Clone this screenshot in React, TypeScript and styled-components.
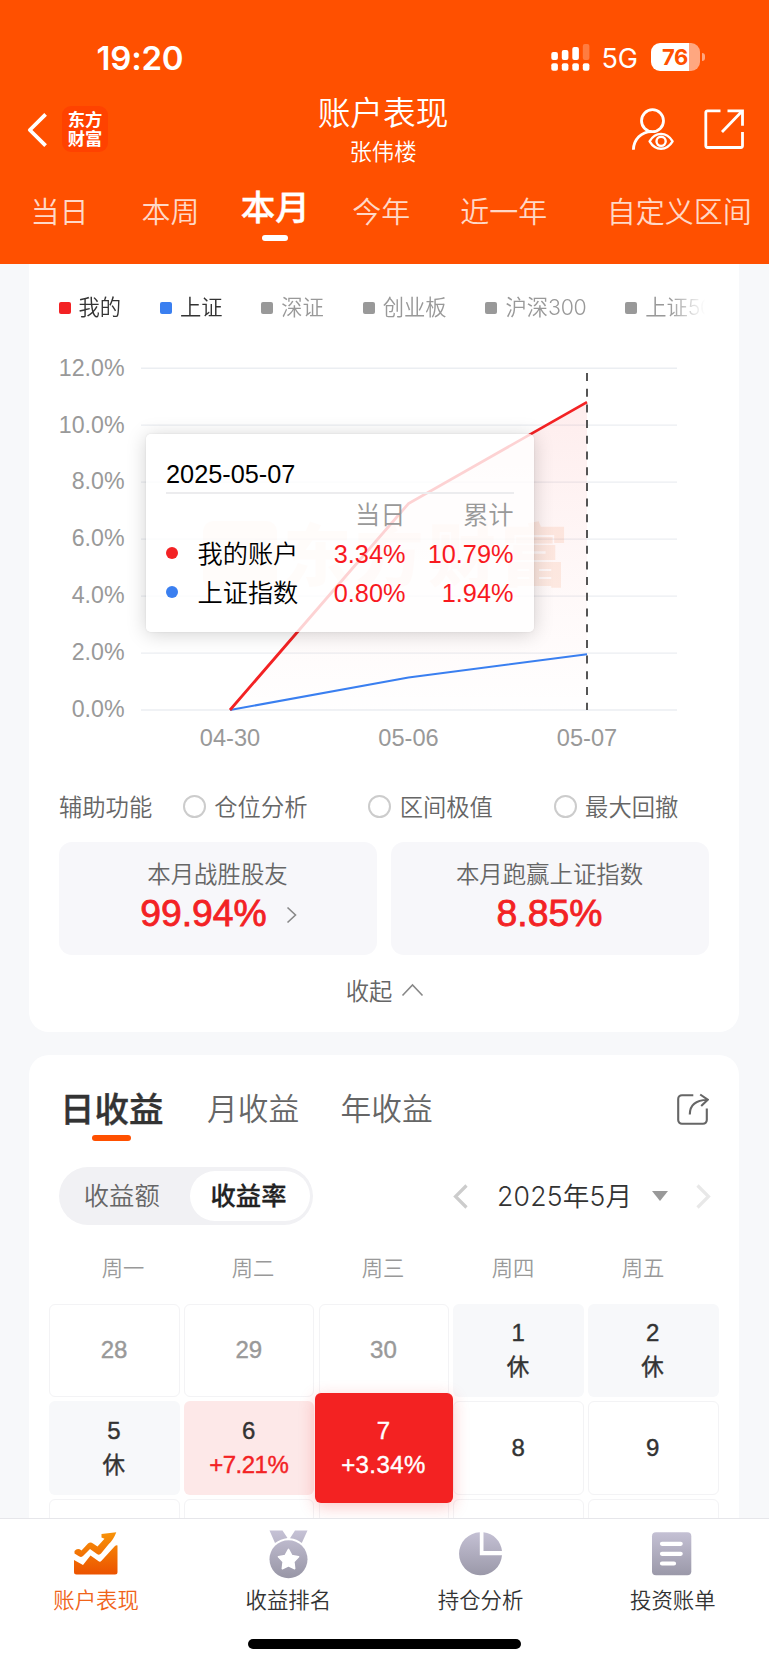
import React from "react";
import styled, { createGlobalStyle, css } from "styled-components";

const CJK = '"Noto Sans CJK SC", sans-serif';
const HELV = '"Liberation Sans", "Noto Sans CJK SC", sans-serif';
const UI = 'Inter, "Noto Sans CJK SC", sans-serif';

const Global = createGlobalStyle`
  * { box-sizing: border-box; }
  body { margin: 0; background: #f7f8fa; font-family: ${CJK}; font-weight: 350; }
`;

const Screen = styled.div`
  width: 769px;
  height: 1665px;
  display: flex;
  flex-direction: column;
  overflow: hidden;
  background: #f7f8fa;
`;

/* ---------- header ---------- */

const Header = styled.header`
  height: 264px;
  flex: none;
  display: flex;
  flex-direction: column;
  background: #ff5000;
  color: #fff;
`;

const StatusBar = styled.div`
  height: 86px;
  padding: 28px 64.5px 0 96.5px;
  display: flex;
  align-items: center;
  font-family: ${UI};
`;

const Clock = styled.div`
  flex: 1;
  font-size: 33px;
  font-weight: 600;
  line-height: 40px;
  padding-top: 1px;
  letter-spacing: -0.2px;
`;

const Network = styled.div`
  width: 37px;
  margin: 0 12px;
  font-size: 27px;
  font-weight: 400;
  line-height: 40px;
  padding-top: 3px;
  letter-spacing: -0.2px;
`;

const Battery = styled.div`
  width: 49px;
  height: 28px;
  border-radius: 9px;
  display: flex;
  align-items: center;
  justify-content: center;
  background: linear-gradient(90deg, #fff 0 38px, #ffa780 38px);
  color: #ff5000;
  font-size: 22px;
  font-weight: 700;
  letter-spacing: -0.3px;
`;

const BatteryTip = styled.div`
  width: 3px;
  height: 8px;
  margin-left: 2px;
  border-radius: 0 4px 4px 0;
  background: #ffa780;
`;

const TitleBar = styled.div`
  height: 90px;
  display: grid;
  grid-template-columns: 258.5px 1fr 261.5px;
`;

const TitleLeft = styled.div`
  display: flex;
  align-items: flex-start;
  padding: 20px 0 0 27px;
`;

const Logo = styled.div`
  width: 46px;
  height: 46px;
  margin-left: 15px;
  border-radius: 9px;
  background: #ff4200;
  display: flex;
  flex-direction: column;
  align-items: center;
  justify-content: center;
  font-size: 17.3px;
  line-height: 19.5px;
  font-weight: 700;
  padding-bottom: 2px;
`;

const TitleCenter = styled.div`
  text-align: center;
`;

const Title = styled.div`
  margin-top: 5px;
  font-size: 32.7px;
  line-height: 40px;
`;

const Subtitle = styled.div`
  margin-top: -1px;
  font-size: 22.4px;
  line-height: 40px;
`;

const TitleRight = styled.div`
  display: flex;
  justify-content: flex-end;
  padding: 20px 24.5px 0 0;
  gap: 28px;
`;

const Periods = styled.nav`
  flex: 1;
  display: flex;
  padding-left: 30px;
`;

const Period = styled.div<{ $gap: number; $on?: boolean }>`
  margin-left: ${(p) => p.$gap}px;
  display: flex;
  flex-direction: column;
  align-items: center;
  white-space: nowrap;
  font-size: 29px;
  line-height: 40px;
  padding-top: 13.5px;
  color: rgba(255, 255, 255, 0.78);
  ${(p) =>
    p.$on &&
    css`
      padding-top: 9px;
      font-size: 34.6px;
      font-weight: 500;
      -webkit-text-stroke: 0.4px #fff;
      color: #fff;
    `}
`;

const PeriodMark = styled.i`
  width: 26px;
  height: 6px;
  margin-top: 10px;
  border-radius: 3px;
  background: #fff;
`;

/* ---------- body ---------- */

const Body = styled.main`
  height: 1254px;
  flex: none;
  overflow: hidden;
  padding: 0 30px 0 29px;
`;

const Card = styled.section<{ $first?: boolean }>`
  background: #fff;
  border-radius: ${(p) => (p.$first ? "0 0 20px 20px" : "20px")};
  height: ${(p) => (p.$first ? 768 : 520)}px;
  margin-bottom: 23px;
`;

const Legend = styled.div`
  margin-left: 29.5px;
  width: 662px;
  padding-top: 28px;
  height: 56px;
  display: flex;
  gap: 38.8px;
  mask-image: linear-gradient(90deg, #000 610px, transparent 646px);
`;

const LegendItem = styled.div<{ $muted?: boolean }>`
  flex: none;
  display: flex;
  align-items: center;
  gap: 8px;
  font-size: 21.3px;
  line-height: 28px;
  color: ${(p) => (p.$muted ? "#999" : "#333")};
`;

const LegendDigits = styled.span`
  font-family: ${UI};
  font-weight: 350;
  letter-spacing: -0.3px;
`;

const Swatch = styled.i<{ $color: string }>`
  width: 12px;
  height: 12px;
  margin-top: 3px;
  border-radius: 2px;
  background: ${(p) => p.$color};
`;

const ChartBox = styled.div`
  position: relative;
  height: 460px;
`;

const Tooltip = styled.div`
  position: absolute;
  left: 117px;
  top: 113.5px;
  width: 388px;
  height: 198px;
  padding: 18px 20.5px 0 20px;
  border-radius: 5px;
  background: rgba(255, 255, 255, 0.8);
  box-shadow: 0 2px 20px rgba(0, 0, 0, 0.18), 0 0 2px rgba(0, 0, 0, 0.1);
  font-family: ${HELV};
  font-size: 25.3px;
  font-weight: 350;
  color: #000;
`;

const TooltipDate = styled.div`
  height: 42px;
  line-height: 44px;
  border-bottom: 2px solid #ececee;
`;

const TooltipRow = styled.div<{ $head?: boolean }>`
  display: grid;
  grid-template-columns: 31.5px 100px 1fr 108px;
  align-items: center;
  text-align: right;
  white-space: nowrap;
  line-height: 39px;
  height: ${(p) => (p.$head ? 41 : 39)}px;
  padding-top: ${(p) => (p.$head ? 2 : 0)}px;
  color: ${(p) => (p.$head ? "#999" : "#f8191f")};
`;

const TooltipName = styled.span`
  text-align: left;
  font-size: 25.2px;
  color: #000;
`;

const Dot = styled.i<{ $color: string }>`
  width: 12px;
  height: 12px;
  margin-top: -2px;
  border-radius: 50%;
  background: ${(p) => p.$color};
`;

const Assist = styled.div`
  height: 51px;
  padding-left: 30px;
  display: flex;
  align-items: center;
  font-size: 23.3px;
  color: #666;
`;

const Option = styled.div`
  width: 185.7px;
  display: flex;
  align-items: center;
  gap: 8.5px;
`;

const AssistLabel = styled.div`
  width: 124px;
`;

const Radio = styled.i`
  width: 23px;
  height: 23px;
  margin-top: 2px;
  border: 2px solid #ccc;
  border-radius: 50%;
`;

const Stats = styled.div`
  margin: 11px 30px 0;
  display: grid;
  grid-template-columns: 1fr 1fr;
  gap: 14px;
`;

const Stat = styled.div`
  height: 113px;
  padding: 13px 1px 0 0;
  border-radius: 13px;
  background: #f7f7fa;
  text-align: center;
  font-size: 23.4px;
  line-height: 36px;
  color: #666;
`;

const StatValue = styled.div<{ $arrow?: boolean }>`
  display: flex;
  justify-content: center;
  align-items: center;
  gap: 19px;
  padding-left: ${(p) => (p.$arrow ? 3 : 0)}px;
  height: 44px;
  font-family: ${HELV};
  font-weight: 400;
  font-size: 37.3px;
  color: #f32224;
  -webkit-text-stroke: 0.8px #f32224;
  svg { margin-top: 4px; }
`;

const Collapse = styled.div`
  margin-top: 15.5px;
  height: 39px;
  padding-left: 2px;
  display: flex;
  align-items: center;
  justify-content: center;
  gap: 9px;
  font-size: 23.3px;
  color: #666;
`;

/* ---------- income card ---------- */

const IncomeTabs = styled.div`
  height: 86px;
  padding: 0 30px 0 31px;
  display: flex;
`;

const IncomeTab = styled.div<{ $on?: boolean }>`
  display: flex;
  flex-direction: column;
  align-items: center;
  padding-top: 31px;
  margin-right: ${(p) => (p.$on ? 43.5 : 41.5)}px;
  font-size: ${(p) => (p.$on ? 34.5 : 30.7)}px;
  font-weight: ${(p) => (p.$on ? 500 : 350)};
  -webkit-text-stroke: ${(p) => (p.$on ? "0.4px #333" : "0")};
  line-height: 42px;
  color: ${(p) => (p.$on ? "#333" : "#666")};
`;

const IncomeMark = styled.i`
  width: 39px;
  height: 6px;
  margin-top: 7px;
  border-radius: 3px;
  background: #ff5000;
`;

const ShareSlot = styled.div`
  margin: 37px 0 0 auto;
`;

const Controls = styled.div`
  margin: 26px 28px 0 30px;
  height: 58px;
  display: flex;
  align-items: center;
  justify-content: space-between;
`;

const Toggle = styled.div`
  width: 253.5px;
  height: 58px;
  padding: 4px 3px;
  display: flex;
  border-radius: 29px;
  background: #f1f1f4;
`;

const Choice = styled.div<{ $on?: boolean }>`
  width: ${(p) => (p.$on ? 120 : 127.5)}px;
  height: 50px;
  padding-right: ${(p) => (p.$on ? 2 : 8)}px;
  border-radius: 25px;
  text-align: center;
  font-size: 25.3px;
  line-height: 47px;
  font-weight: ${(p) => (p.$on ? 500 : 350)};
  -webkit-text-stroke: ${(p) => (p.$on ? "0.3px #222" : "0")};
  color: ${(p) => (p.$on ? "#222" : "#666")};
  background: ${(p) => (p.$on ? "#fff" : "transparent")};
`;

const MonthPicker = styled.div`
  display: flex;
  align-items: center;
  font-family: ${UI};
  font-weight: 350;
  font-size: 26.6px;
  color: #333;
`;

const Month = styled.span`
  width: 134px;
  margin: 0 21px 0 28px;
  padding-bottom: 3px;
  letter-spacing: 0.2px;
  white-space: nowrap;
`;

const MonthNext = styled.span`
  display: flex;
  margin-left: 27px;
`;

const Weekdays = styled.div`
  margin: 27px 31px 0 29px;
  display: grid;
  grid-template-columns: repeat(5, 1fr);
  text-align: center;
  font-size: 21.3px;
  line-height: 30px;
  color: #999;
`;

const Days = styled.div`
  margin: 21.5px 0 0 20.3px;
  display: grid;
  grid-template-columns: repeat(5, 130.5px);
  grid-auto-rows: 93.4px;
  gap: 4.3px 4.2px;
`;

type Kind = "off" | "plain" | "rest" | "gain" | "active";

const kinds = {
  off: css`color: #999; border-color: #f3f3f5;`,
  plain: css`border-color: #f3f3f5;`,
  rest: css`background: #f7f8fa;`,
  gain: css`background: #fde8e8;`,
  active: css`
    z-index: 1;
    margin: -8.2px -4.1px;
    color: #fff;
    background: #f32222;
    box-shadow: 0 4px 16px rgba(243, 34, 34, 0.25);
  `,
};

const Day = styled.div<{ $kind: Kind }>`
  display: flex;
  flex-direction: column;
  align-items: center;
  justify-content: center;
  padding: 0 1px 0 0;
  border: 1.4px solid transparent;
  border-radius: 6px;
  font-family: ${HELV};
  font-weight: 400;
  font-size: 24px;
  line-height: 33.7px;
  color: #333;
  -webkit-text-stroke: 0.4px currentColor;
  ${(p) => kinds[p.$kind]}
`;

const Note = styled.span<{ $color?: string; $tight?: boolean }>`
  color: ${(p) => p.$color || "inherit"};
  letter-spacing: ${(p) => (p.$tight ? -0.5 : 0.4)}px;
`;

const RestNote = styled(Note)`
  font-size: 22.5px;
  padding-top: 1px;
  margin-bottom: -1px;
`;

/* ---------- bottom bar ---------- */

const TabBar = styled.footer`
  height: 147px;
  flex: none;
  border-top: 1px solid #e6e6ea;
  background: #fff;
  display: flex;
  flex-direction: column;
`;

const TabRow = styled.div`
  height: 120px;
  display: grid;
  grid-template-columns: repeat(4, 1fr);
`;

const TabItem = styled.div<{ $on?: boolean }>`
  display: flex;
  flex-direction: column;
  align-items: center;
  padding-top: 9px;
  font-size: 21.4px;
  line-height: 30px;
  color: ${(p) => (p.$on ? "#f0641a" : "#333")};
  svg { margin-bottom: 4px; }
`;

const HomeBar = styled.div`
  width: 273px;
  height: 10px;
  align-self: center;
  margin-right: 1px;
  border-radius: 5px;
  background: #000;
`;

/* ---------- drawings ---------- */

const SignalIcon = () => (
  <svg width="39" height="28" viewBox="0 0 39 28" fill="#fff">
    {[9, 7, 4, 1].map((top, i) => (
      <g key={i}>
        <rect x={i * 10.5 + 0.3} y={top} width="6.6" height={17 - top} rx="2" opacity={i === 3 ? 0.25 : 1} />
        <rect x={i * 10.5 + 0.3} y="20.3" width="6.6" height="7.4" rx="2" />
      </g>
    ))}
  </svg>
);

const BackIcon = () => (
  <svg width="20" height="48" viewBox="0 0 20 48" fill="none" stroke="#fff" strokeWidth="3.8">
    <path d="M18.6 8.3 2.8 24l15.8 15.7" strokeLinejoin="round" />
  </svg>
);

const UserEyeIcon = () => (
  <svg width="44" height="46" viewBox="0 0 44 46" fill="none" stroke="#fff" strokeWidth="2.8">
    <circle cx="21.5" cy="14.7" r="11" />
    <path d="M2.4 43.8C2.6 33.5 10.5 25.6 20.5 25.6" />
    <path d="M18.6 35.3C24.5 25.4 35.5 25.4 41.6 35.3 35.5 45.2 24.5 45.2 18.6 35.3Z" strokeWidth="2.4" strokeLinejoin="round" />
    <circle cx="30.1" cy="35.3" r="4.6" strokeWidth="2.4" />
  </svg>
);

const ExportIcon = () => (
  <svg width="42" height="46" viewBox="0 0 42 46" fill="none" stroke="#fff" strokeWidth="2.8">
    <path d="M17.5 4.8H4.5a1.7 1.7 0 0 0-1.7 1.7v33.3a1.7 1.7 0 0 0 1.7 1.7h33.3a1.7 1.7 0 0 0 1.7-1.7V26" />
    <path d="M24.5 4.8h15v15M39 5.3 19 26" />
  </svg>
);

const ShareIcon = () => (
  <svg width="34" height="36" viewBox="0 0 34 36" fill="none" stroke="#666" strokeWidth="2.1">
    <path d="M18.3 3.2H7A3.8 3.8 0 0 0 3.2 7v21A3.8 3.8 0 0 0 7 31.8h21a3.8 3.8 0 0 0 3.8-3.8V16.5" />
    <path d="M14.8 22.5C14.8 13.5 20.5 8.2 32.5 7.8M25.2 2.5l7.5 5.2-6.5 6.3" />
  </svg>
);

const Arrow = ({ color, flip }: { color: string; flip?: boolean }) => (
  <svg width="16" height="25" viewBox="0 0 16 25" fill="none" stroke={color} strokeWidth="3.2">
    <path d="M13.5 1.5 2.5 12.5l11 11" transform={flip ? "translate(16 0) scale(-1 1)" : undefined} />
  </svg>
);

const GradientDefs = styled.svg`
  display: block;
  flex: none;
  width: 0;
  height: 0;
`;

const Gradients = () => (
  <GradientDefs>
    <defs>
      <linearGradient id="hot" x1="0" y1="0" x2="0" y2="46" gradientUnits="userSpaceOnUse">
        <stop stopColor="#f99a0a" />
        <stop offset="1" stopColor="#ec5300" />
      </linearGradient>
      <linearGradient id="cool" x1="0" y1="0" x2="0" y2="48" gradientUnits="userSpaceOnUse">
        <stop stopColor="#c8c4d8" />
        <stop offset="1" stopColor="#9a98a8" />
      </linearGradient>
    </defs>
  </GradientDefs>
);

const TrendIcon = () => (
  <svg width="46" height="52" viewBox="0 0 46 52" fill="url(#hot)">
    <path d="M1.5 23Q4.5 19.5 8.5 22.5L15 15.5Q17.5 13.5 20 15.5L24.5 18.5 31.5 10.8 28.5 9.5V6L43.3 4.2Q40.5 11.5 36 15.8L28 25.5Q26.3 27.5 24 26L17 21 10.5 27.5Q8.5 30 6 28.2L1.5 25.5Z" />
    <path d="M1 32 10 37 17.5 27.5 26 33.5Q27.5 34 28.5 32.8L41.5 18.5Q43.5 16.5 44.5 17.5V44Q44.5 46.5 42 46.5H3.5Q1 46.5 1 44Z" />
  </svg>
);

const MedalIcon = () => (
  <svg width="46" height="52" viewBox="0 0 46 52" fill="url(#cool)">
    <path d="M4.5 2.5H17.5L22.5 10Q15.5 11 10 15ZM30 2.5H42.5L36.8 15Q32 11 25 10.2Z" />
    <circle cx="23.5" cy="31.3" r="19" />
    <path d="m23.5 21.3 3.3 6.1 6.8 1.3-4.7 5.1.8 6.9-6.2-2.9-6.2 2.9.8-6.9-4.7-5.1 6.8-1.3Z" fill="#fff" stroke="#fff" strokeWidth="1.5" strokeLinejoin="round" />
  </svg>
);

const PieIcon = () => (
  <svg width="46" height="52" viewBox="0 0 46 52" fill="url(#cool)">
    <path d="M21.8 4.3V27.3H44A21.5 21.5 0 1 1 21.8 4.3Z" />
    <path d="M25.5 4.3V23H44C43 13.5 35.5 5.3 25.5 4.3Z" />
  </svg>
);

const BillIcon = () => (
  <svg width="46" height="52" viewBox="0 0 46 52" fill="url(#cool)">
    <rect x="2" y="4.2" width="39.3" height="43" rx="4" />
    <path d="M12 15.8h18.7M12 25.8h18.7M12 35.5h12" stroke="#fff" strokeWidth="4.2" strokeLinecap="round" />
  </svg>
);

/* ---------- chart ---------- */

const days = ["04-30", "05-06", "05-07"];
const mine = [0, 7.25, 10.81];
const index = [0, 1.14, 1.96];
const px = (i: number) => 201 + i * 178.5;
const py = (v: number) => 390 - v * 28.48;
const points = (values: number[]) => values.map((v, i) => `${px(i)},${py(v)}`).join(" ");

const Chart = () => (
  <svg width="710" height="460" viewBox="0 0 710 460" fontFamily={HELV} fontWeight="400">
    <defs>
      <linearGradient id="area" x1="0" y1="0" x2="0" y2="1">
        <stop stopColor="#f32222" stopOpacity="0.08" />
        <stop offset="0.6" stopColor="#f32222" stopOpacity="0.03" />
        <stop offset="1" stopColor="#f32222" stopOpacity="0.003" />
      </linearGradient>
    </defs>
    {[0, 2, 4, 6, 8, 10, 12].map((v) => (
      <g key={v}>
        <line x1="112" x2="648" y1={py(v)} y2={py(v)} stroke="#ebeef2" strokeWidth="1.3" />
        <text x="95.5" y={py(v) + 7.3} textAnchor="end" fontSize="23.2" fill="#999">
          {v.toFixed(1)}%
        </text>
      </g>
    ))}
    <g fill="#f5793b" opacity="0.12">
      <rect x="174" y="201" width="74" height="69" rx="10" />
      <text x="254" y="261" fontSize="68" fontWeight="900" letterSpacing="4.5" fontFamily={CJK}>
        东方财富
      </text>
    </g>
    <polygon points={`${px(0)},${py(0)} ${points(mine)} ${px(2)},${py(0)}`} fill="url(#area)" />
    <polyline points={points(index)} fill="none" stroke="#3a7ff0" strokeWidth="2" />
    <polyline points={points(mine)} fill="none" stroke="#f32224" strokeWidth="2.8" />
    <line x1={px(2)} x2={px(2)} y1="53" y2="390" stroke="#555" strokeWidth="2" strokeDasharray="8 7.7" />
    {days.map((d, i) => (
      <text key={d} x={px(i)} y="425.5" textAnchor="middle" fontSize="23.6" fill="#999">
        {d}
      </text>
    ))}
  </svg>
);

const periods = [
  { name: "当日", gap: 0.5 },
  { name: "本周", gap: 53 },
  { name: "本月", gap: 41.2, on: true },
  { name: "今年", gap: 42.3 },
  { name: "近一年", gap: 50 },
  { name: "自定义区间", gap: 59.5 },
];

const calendar: { day: number; kind: Kind; note?: string }[] = [
  { day: 28, kind: "off" },
  { day: 29, kind: "off" },
  { day: 30, kind: "off" },
  { day: 1, kind: "rest", note: "休" },
  { day: 2, kind: "rest", note: "休" },
  { day: 5, kind: "rest", note: "休" },
  { day: 6, kind: "gain", note: "+7.21%" },
  { day: 7, kind: "active", note: "+3.34%" },
  { day: 8, kind: "plain" },
  { day: 9, kind: "plain" },
];

export default function App() {
  return (
    <Screen>
      <Global />
      <Gradients />
      <Header>
        <StatusBar>
          <Clock>19:20</Clock>
          <SignalIcon />
          <Network>5G</Network>
          <Battery>76</Battery>
          <BatteryTip />
        </StatusBar>
        <TitleBar>
          <TitleLeft>
            <BackIcon />
            <Logo>
              <span>东方</span>
              <span>财富</span>
            </Logo>
          </TitleLeft>
          <TitleCenter>
            <Title>账户表现</Title>
            <Subtitle>张伟楼</Subtitle>
          </TitleCenter>
          <TitleRight>
            <UserEyeIcon />
            <ExportIcon />
          </TitleRight>
        </TitleBar>
        <Periods>
          {periods.map((p) => (
            <Period key={p.name} $gap={p.gap} $on={p.on}>
              {p.name}
              {p.on && <PeriodMark />}
            </Period>
          ))}
        </Periods>
      </Header>

      <Body>
        <Card $first>
          <Legend>
            <LegendItem><Swatch $color="#f32224" />我的</LegendItem>
            <LegendItem><Swatch $color="#3a7ff0" />上证</LegendItem>
            <LegendItem $muted><Swatch $color="#999" />深证</LegendItem>
            <LegendItem $muted><Swatch $color="#999" />创业板</LegendItem>
            <LegendItem $muted><Swatch $color="#999" /><span>沪深<LegendDigits>300</LegendDigits></span></LegendItem>
            <LegendItem $muted><Swatch $color="#999" /><span>上证<LegendDigits>50</LegendDigits></span></LegendItem>
          </Legend>
          <ChartBox>
            <Chart />
            <Tooltip>
              <TooltipDate>2025-05-07</TooltipDate>
              <TooltipRow $head>
                <span /><span /><span>当日</span><span>累计</span>
              </TooltipRow>
              <TooltipRow>
                <Dot $color="#f32224" /><TooltipName>我的账户</TooltipName><span>3.34%</span><span>10.79%</span>
              </TooltipRow>
              <TooltipRow>
                <Dot $color="#3a7ff0" /><TooltipName>上证指数</TooltipName><span>0.80%</span><span>1.94%</span>
              </TooltipRow>
            </Tooltip>
          </ChartBox>
          <Assist>
            <AssistLabel>辅助功能</AssistLabel>
            <Option><Radio />仓位分析</Option>
            <Option><Radio />区间极值</Option>
            <Option><Radio />最大回撤</Option>
          </Assist>
          <Stats>
            <Stat>
              本月战胜股友
              <StatValue $arrow>
                99.94%
                <svg width="12" height="18" viewBox="0 0 12 18" fill="none" stroke="#888" strokeWidth="1.6">
                  <path d="M1.5 1.5 9.5 9l-8 7.5" />
                </svg>
              </StatValue>
            </Stat>
            <Stat>
              本月跑赢上证指数
              <StatValue>8.85%</StatValue>
            </Stat>
          </Stats>
          <Collapse>
            收起
            <svg width="23" height="14" viewBox="0 0 23 14" fill="none" stroke="#888" strokeWidth="1.6">
              <path d="M1.5 12.5 11.5 2l10 10.5" />
            </svg>
          </Collapse>
        </Card>

        <Card>
          <IncomeTabs>
            <IncomeTab $on>
              日收益
              <IncomeMark />
            </IncomeTab>
            <IncomeTab>月收益</IncomeTab>
            <IncomeTab>年收益</IncomeTab>
            <ShareSlot><ShareIcon /></ShareSlot>
          </IncomeTabs>
          <Controls>
            <Toggle>
              <Choice>收益额</Choice>
              <Choice $on>收益率</Choice>
            </Toggle>
            <MonthPicker>
              <Arrow color="#ccc" />
              <Month>2025年5月</Month>
              <svg width="16" height="10" viewBox="0 0 16 10" fill="#999">
                <path d="M0 0H16L8 10Z" />
              </svg>
              <MonthNext><Arrow color="#e8e8e8" flip /></MonthNext>
            </MonthPicker>
          </Controls>
          <Weekdays>
            {["周一", "周二", "周三", "周四", "周五"].map((d) => (
              <span key={d}>{d}</span>
            ))}
          </Weekdays>
          <Days>
            {calendar.map((c) => (
              <Day key={c.day} $kind={c.kind}>
                {c.day}
                {c.kind === "rest" && <RestNote>{c.note}</RestNote>}
                {c.kind === "gain" && <Note $color="#f32224" $tight>{c.note}</Note>}
                {c.kind === "active" && <Note>{c.note}</Note>}
              </Day>
            ))}
            {[0, 1, 2, 3, 4].map((i) => (
              <Day key={`next-${i}`} $kind="plain" />
            ))}
          </Days>
        </Card>
      </Body>

      <TabBar>
        <TabRow>
          <TabItem $on><TrendIcon />账户表现</TabItem>
          <TabItem><MedalIcon />收益排名</TabItem>
          <TabItem><PieIcon />持仓分析</TabItem>
          <TabItem><BillIcon />投资账单</TabItem>
        </TabRow>
        <HomeBar />
      </TabBar>
    </Screen>
  );
}
